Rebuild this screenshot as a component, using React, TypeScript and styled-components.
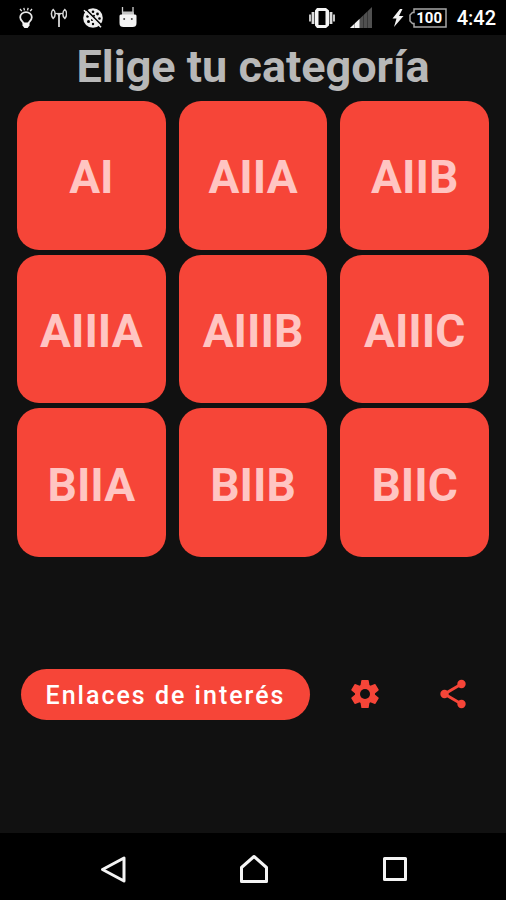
import React from "react";
import styled, { createGlobalStyle } from "styled-components";

const RED = "#f64538";

const GlobalStyle = createGlobalStyle`
  *, *::before, *::after { box-sizing: border-box; }
  body { margin: 0; background: #111111; font-family: Roboto, sans-serif; }
  button { font-family: inherit; border: 0; padding: 0; margin: 0; cursor: pointer; }
  svg { display: block; flex: none; }
`;

const Screen = styled.div`
  display: flex;
  flex-direction: column;
  min-height: 100vh;
  background: #111111;
`;

const StatusBar = styled.header`
  display: flex;
  align-items: center;
  justify-content: space-between;
  height: 35px;
  padding: 0 10px 0 18px;
  background: #000000;
`;

const StatusGroup = styled.div<{ $gap: number }>`
  display: flex;
  align-items: center;
  gap: ${({ $gap }) => $gap}px;
`;

const Battery = styled.div`
  position: relative;
  display: flex;
  align-items: center;
  justify-content: center;
  width: 40px;
  height: 20px;
  padding-left: 3px;
  color: #ffffff;
  font-size: 15px;
  font-weight: 700;
  line-height: 20px;

  svg { position: absolute; inset: 0; }
`;

const Clock = styled.time`
  color: #ffffff;
  font-size: 20px;
  font-weight: 500;
  line-height: 24px;
`;

const Title = styled.h1`
  margin: 0;
  padding-top: 4px;
  color: #b8b8b8;
  font-size: 45px;
  font-weight: 700;
  line-height: 56px;
  text-align: center;
`;

const CategoryGrid = styled.div`
  display: grid;
  grid-template-columns: repeat(3, minmax(0, 1fr));
  gap: 5px 13px;
  padding: 6px 17px 0;
`;

const CategoryButton = styled.button`
  aspect-ratio: 1;
  padding-top: 4px;
  border-radius: 22px;
  background: ${RED};
  color: #ffc5c2;
  font-size: 46px;
  font-weight: 700;
  line-height: 56px;
`;

const Main = styled.main`
  flex: 1;
  display: flex;
  flex-direction: column;
`;

const ActionArea = styled.div`
  flex: 1;
  display: grid;
  grid-template-columns: minmax(0, 1fr) 88px 88px;
  align-items: center;
  padding: 0 9px 2px 21px;
`;

const LinksButton = styled.button`
  height: 51px;
  margin-right: 11px;
  padding-top: 3px;
  border-radius: 26px;
  background: ${RED};
  color: #ffffff;
  font-size: 25px;
  font-weight: 500;
  line-height: 32px;
  letter-spacing: 2px;
  white-space: nowrap;
`;

const IconButton = styled.button`
  display: flex;
  align-items: center;
  justify-content: center;
  justify-self: center;
  width: 52px;
  height: 52px;
  background: transparent;
  color: ${RED};
`;

const NavBar = styled.nav`
  display: grid;
  grid-template-columns: repeat(3, minmax(0, 1fr));
  height: 67px;
  padding: 0 42px 0 43px;
  background: #000000;
`;

const NavButton = styled.button`
  display: flex;
  align-items: center;
  justify-content: center;
  padding-top: 4px;
  background: transparent;
`;

const BulbIcon = () => (
  <svg width="16" height="22" viewBox="0 0 16 22" fill="none" stroke="#e8e8e8" aria-hidden="true">
    <path d="M5.6 16.4C5.4 14.6 2.2 13.4 2.200 10.2a5.800 5 0 0 1 11.600 0c0 3.2-3.200 4.4-3.400 6.2" strokeWidth="1.8" />
    <path d="M4.500 15.500h7v3L9.600 21H6.400L4.500 18.500z" fill="#f4f4f4" stroke="none" />
    <path d="M2 2l1.800 2.200M5.800 .8l.7 2.600M10.200 .8l-.7 2.600M14 2l-1.800 2.200" strokeWidth="1.300" />
  </svg>
);

const AntennaIcon = () => (
  <svg width="18" height="20" viewBox="0 0 18 20" fill="none" stroke="#d8d8d8" aria-hidden="true">
    <path d="M10 6.500V19" strokeWidth="1.800" />
    <path d="M7.500 5h5L10 9z" fill="#d8d8d8" stroke="none" />
    <path d="M4.200 1.500C1.800 3.500 1.800 8 4.200 10.500 6.800 8.500 6.800 3.500 4.200 1.500zM15.800 1.500c-2.600 2-2.600 7 0 9 2.400-2.500 2.400-7 0-9z" strokeWidth="1.500" />
    <path d="M6 5.500h8" strokeWidth="1.200" />
  </svg>
);

const CookieIcon = () => (
  <svg width="22" height="22" viewBox="0 0 22 22" aria-hidden="true">
    <circle cx="11" cy="11" r="9.800" fill="#eeeeee" />
    <g fill="#000000">
      <circle cx="11" cy="4.800" r="1.300" />
      <circle cx="15.500" cy="7" r="1.400" />
      <circle cx="5.500" cy="9.500" r="1.300" />
      <circle cx="6.500" cy="14.500" r="1.500" />
      <circle cx="11" cy="17" r="1.200" />
      <circle cx="17.500" cy="11.500" r="1.300" />
      <circle cx="10" cy="13" r="1.100" />
      <circle cx="12" cy="8.800" r="1" />
    </g>
    <path d="M3.500 2l17 17" stroke="#000000" strokeWidth="1.600" />
    <path d="M2 3.200l17 17" stroke="#eeeeee" strokeWidth="1.600" />
  </svg>
);

const AndroidIcon = () => (
  <svg width="18" height="22" viewBox="0 0 18 22" aria-hidden="true">
    <path d="M3.500 0v6M14 0v6" stroke="#d0d0d0" strokeWidth="1.300" />
    <path d="M3 9V6.500C3 5 4 4.500 5 4.500h8c1 0 2 .5 2 2V9z" fill="#c4c4c4" />
    <path d="M.5 9C.5 7.800 1.500 7.500 3 7.500h12c1.500 0 2.500.3 2.500 1.500v7c0 3-1.500 4-4 4h-9c-2.500 0-4-1-4-4z" fill="#f4f4f4" />
    <circle cx="5.200" cy="12" r="1" fill="#444444" />
    <circle cx="12.800" cy="12" r="1" fill="#444444" />
  </svg>
);

const VibrateIcon = () => (
  <svg width="28" height="20" viewBox="0 0 28 20" aria-hidden="true">
    <path d="M9 0h9l3 2.500v15L18 20H9l-2-2.500v-15zM10.500 3v14h7V3z" fill="#f4f4f4" fillRule="evenodd" />
    <path d="M5 4v12M23 4v12" stroke="#dddddd" strokeWidth="2.800" />
    <path d="M2 6.500v7M26 6.500v7" stroke="#c4c4c4" strokeWidth="2" />
  </svg>
);

const SignalIcon = () => (
  <svg width="22" height="21" viewBox="0 0 22 21" aria-hidden="true">
    <path d="M0 21L22 0v21z" fill="#505050" />
    <path d="M0 21L9.500 12v9z" fill="#f4f4f4" />
    <path d="M4.500 15v6M13.500 7v14M17.500 3v18" stroke="#000000" strokeOpacity=".3" />
  </svg>
);

const BoltIcon = () => (
  <svg width="12" height="18" viewBox="0 0 12 18" aria-hidden="true">
    <path d="M8 0L.5 9.500h4L2 18l9.500-11H7L10.500 0z" fill="#f4f4f4" />
  </svg>
);

const BatteryOutline = () => (
  <svg width="40" height="20" viewBox="0 0 40 20" fill="none" stroke="#a6a6a6" strokeWidth="1.500" aria-hidden="true">
    <path d="M6 1h32v18H6v-3.500H4.500L2 13V7l2.500-2.500H6z" />
  </svg>
);

const GEAR_ANGLES = [0, 60, 120];

const SettingsIcon = () => (
  <svg width="34" height="34" viewBox="-17 -17 34 34" fill="currentColor" aria-hidden="true">
    {GEAR_ANGLES.map((angle) => (
      <path key={angle} d="M-3-14h6q.6 0 .7.600L4.600-8v16l-.9 5.400q-.1.600-.7.600h-6q-.6 0-.7-.600L-4.600 8V-8l.9-5.400q.1-.6.7-.6z" transform={`rotate(${angle})`} />
    ))}
    <circle r="10" />
    <circle r="5" fill="#111111" />
  </svg>
);

const ShareIcon = () => (
  <svg width="34" height="34" viewBox="0 0 34 34" fill="currentColor" aria-hidden="true">
    <path d="M25.500 7L8.500 17l17 10" fill="none" stroke="currentColor" strokeWidth="3" />
    <circle cx="25.500" cy="7" r="4.200" />
    <circle cx="8.500" cy="17" r="4.200" />
    <circle cx="25.500" cy="27" r="4.200" />
  </svg>
);

const NavIcon = ({ d }: { d: string }) => (
  <svg width="30" height="30" viewBox="0 0 30 30" fill="none" stroke="#f4f4f4" strokeWidth="3" strokeLinejoin="round" aria-hidden="true">
    <path d={d} />
  </svg>
);

const categories = ["AI", "AIIA", "AIIB", "AIIIA", "AIIIB", "AIIIC", "BIIA", "BIIB", "BIIC"];

const navItems = [
  { label: "Atrás", d: "M26 4v23L4.500 15.500z" },
  { label: "Inicio", d: "M16 2.500L28.500 13.500V27.500H3.500V13.500z" },
  { label: "Recientes", d: "M5.500 4.500h21v21H5.500z" },
];

export default function App() {
  return (
    <>
      <GlobalStyle />
      <Screen>
        <StatusBar>
          <StatusGroup $gap={15}>
            <BulbIcon />
            <AntennaIcon />
            <CookieIcon />
            <AndroidIcon />
          </StatusGroup>
          <StatusGroup $gap={20}>
            <StatusGroup $gap={14}>
              <VibrateIcon />
              <SignalIcon />
            </StatusGroup>
            <StatusGroup $gap={9}>
              <StatusGroup $gap={4}>
                <BoltIcon />
                <Battery>
                  <BatteryOutline />
                  100
                </Battery>
              </StatusGroup>
              <Clock>4:42</Clock>
            </StatusGroup>
          </StatusGroup>
        </StatusBar>
        <Main>
          <Title>Elige tu categoría</Title>
          <CategoryGrid>
            {categories.map((name) => (
              <CategoryButton key={name} type="button">
                {name}
              </CategoryButton>
            ))}
          </CategoryGrid>
          <ActionArea>
            <LinksButton type="button">Enlaces de interés</LinksButton>
            <IconButton type="button" aria-label="Ajustes">
              <SettingsIcon />
            </IconButton>
            <IconButton type="button" aria-label="Compartir">
              <ShareIcon />
            </IconButton>
          </ActionArea>
        </Main>
        <NavBar>
          {navItems.map((item) => (
            <NavButton key={item.label} type="button" aria-label={item.label}>
              <NavIcon d={item.d} />
            </NavButton>
          ))}
        </NavBar>
      </Screen>
    </>
  );
}
